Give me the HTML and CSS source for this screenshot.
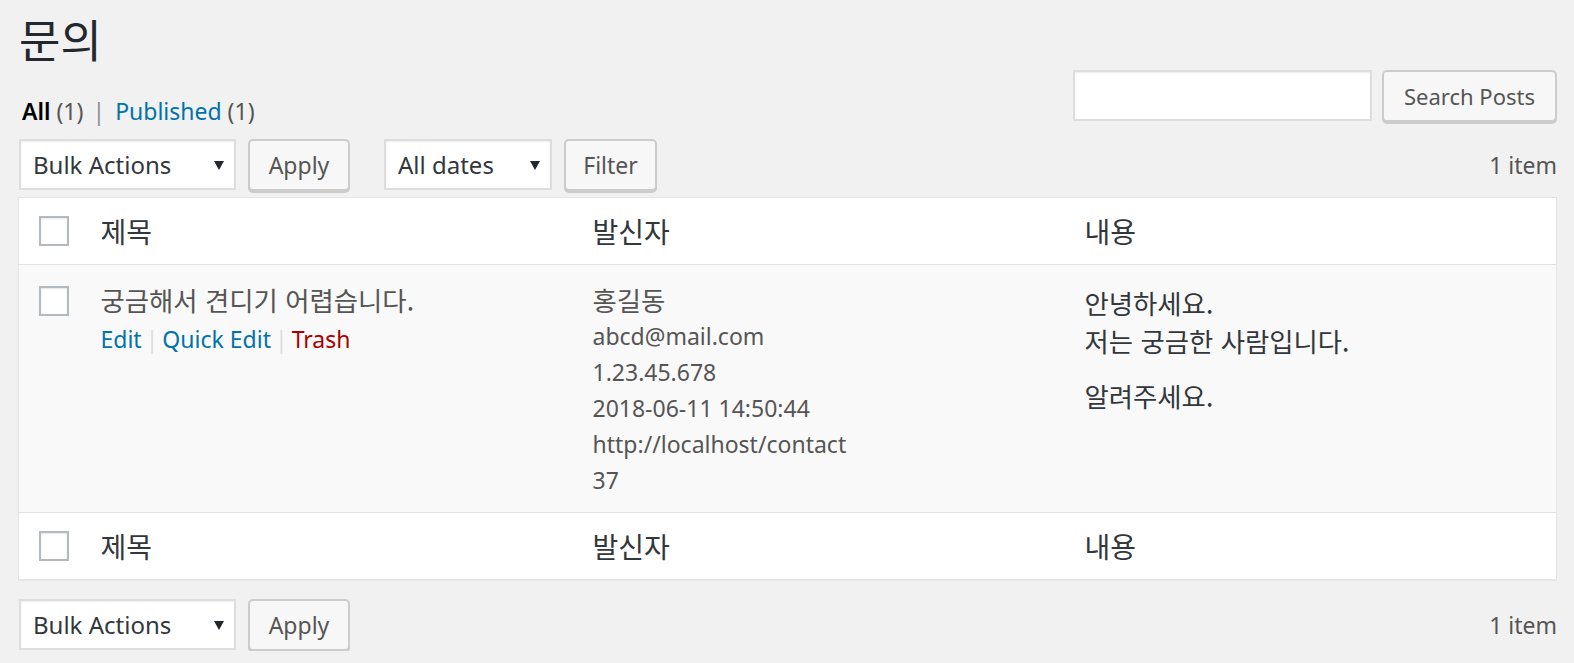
FILE: index.html
```html
<!DOCTYPE html>
<html lang="ko">
<head>
<meta charset="utf-8">
<title>문의</title>
<link rel="stylesheet" href="styles.css">
</head>
<body>
<div class="wrap">
  <h1 class="page-title">문의</h1>
  <div class="top-bar">
    <ul class="subsubsub">
      <li class="current">All <span class="count">(1)</span></li>
      <li class="sep">|</li>
      <li><a class="link">Published</a> <span class="count">(1)</span></li>
    </ul>
    <div class="search-box">
      <input class="search-input" type="text">
      <button class="button btn-search">Search Posts</button>
    </div>
  </div>

  <div class="tablenav">
    <div class="actions">
      <div class="select select-bulk"><span>Bulk Actions</span><span class="arrow"></span></div>
      <button class="button btn-apply">Apply</button>
    </div>
    <div class="actions">
      <div class="select select-dates"><span>All dates</span><span class="arrow"></span></div>
      <button class="button btn-filter">Filter</button>
    </div>
    <div class="displaying-num">1 item</div>
  </div>

  <table class="list-table">
    <colgroup>
      <col class="col-cb">
      <col class="col-title">
      <col class="col-sender">
      <col>
    </colgroup>
    <thead>
      <tr>
        <td class="check-column"><span class="checkbox"></span></td>
        <th>제목</th>
        <th>발신자</th>
        <th>내용</th>
      </tr>
    </thead>
    <tbody>
      <tr class="alt">
        <td class="check-column"><span class="checkbox"></span></td>
        <td class="title-cell">
          <div class="row-title ko">궁금해서 견디기 어렵습니다.</div>
          <div class="row-actions">
            <a class="link">Edit</a><span class="bar">|</span><a class="link">Quick Edit</a><span class="bar">|</span><a class="trash">Trash</a>
          </div>
        </td>
        <td class="sender">
          <div class="ko">홍길동</div>
          <div>abcd@mail.com</div>
          <div>1.23.45.678</div>
          <div>2018-06-11 14:50:44</div>
          <div>http://localhost/contact</div>
          <div>37</div>
        </td>
        <td class="content ko">
          <p>안녕하세요.<br>저는 궁금한 사람입니다.</p>
          <p>알려주세요.</p>
        </td>
      </tr>
    </tbody>
    <tfoot>
      <tr>
        <td class="check-column"><span class="checkbox"></span></td>
        <th>제목</th>
        <th>발신자</th>
        <th>내용</th>
      </tr>
    </tfoot>
  </table>

  <div class="tablenav tablenav-bottom">
    <div class="actions">
      <div class="select select-bulk"><span>Bulk Actions</span><span class="arrow"></span></div>
      <button class="button btn-apply">Apply</button>
    </div>
    <div class="displaying-num">1 item</div>
  </div>
</div>
</body>
</html>
```

FILE: styles.css
```css
html, body {
  margin: 0;
  padding: 0;
  background: #f1f1f1;
}
body {
  font-family: "Noto Sans", "Noto Sans CJK KR", sans-serif;
  color: #444;
  font-size: 23px;
}
.ko {
  font-family: "Noto Sans CJK KR", "Noto Sans", sans-serif;
}
.wrap {
  padding: 0 17px 0 18px;
}
.page-title {
  margin: 0;
  padding: 8px 0 0 1px;
  height: 62px;
  font-family: "Noto Sans CJK KR", sans-serif;
  font-size: 45px;
  line-height: 62px;
  font-weight: 400;
  color: #23282d;
}
.top-bar {
  display: flex;
  justify-content: space-between;
  align-items: flex-start;
}
.subsubsub {
  list-style: none;
  margin: 23px 0 0 4px;
  padding: 0;
  display: flex;
  font-size: 23px;
  line-height: 36px;
  color: #555;
}
.subsubsub .current {
  color: #000;
  font-weight: 600;
}
.subsubsub .current .count {
  font-weight: 400;
}
.subsubsub .sep {
  color: #8c8f94;
  padding: 0 10px 0 9px;
}
.count {
  color: #555;
}
.link {
  color: #0073aa;
}
.trash {
  color: #a00;
}
.search-box {
  display: flex;
  gap: 10px;
}
.search-input {
  width: 299px;
  height: 51px;
  box-sizing: border-box;
  border: 2px solid #ddd;
  background: #fff;
  box-shadow: inset 0 1px 2px rgba(0,0,0,.07);
  margin: 0;
}
.button {
  height: 52px;
  box-sizing: border-box;
  border: 2px solid #ccc;
  border-radius: 5px;
  background: #f7f7f7;
  box-shadow: 0 2px 0 #ccc;
  color: #555;
  font-family: "Noto Sans", sans-serif;
  font-size: 23px;
  padding: 0;
  line-height: 46px;
  margin: 0;
}
.btn-search {
  width: 175px;
  font-size: 22px;
}
.tablenav {
  display: flex;
  align-items: center;
  height: 52px;
  margin: 10px 0 6px;
}
.tablenav-bottom {
  margin: 19px 0 0;
}
.actions {
  display: flex;
  gap: 12px;
  margin-left: 1px;
  margin-right: 33px;
}
.select {
  position: relative;
  box-sizing: border-box;
  height: 51px;
  border: 2px solid #ddd;
  background: #fff;
  box-shadow: inset 0 1px 2px rgba(0,0,0,.07);
  color: #32373c;
  font-size: 24px;
  line-height: 47px;
  padding-left: 12px;
}
.select-bulk {
  width: 217px;
}
.select-dates {
  width: 168px;
}
.arrow {
  position: absolute;
  right: 10px;
  top: 20px;
  width: 0;
  height: 0;
  border-left: 5px solid transparent;
  border-right: 5px solid transparent;
  border-top: 9px solid #23282d;
}
.btn-apply {
  width: 102px;
}
.btn-filter {
  width: 93px;
}
.displaying-num {
  margin-left: auto;
  color: #555;
  font-size: 23px;
}
.list-table {
  width: 100%;
  table-layout: fixed;
  border-collapse: collapse;
  border: 1px solid #e5e5e5;
  background: #fff;
  box-shadow: 0 1px 1px rgba(0,0,0,.04);
}
.col-cb {
  width: 67px;
}
.col-title {
  width: 492px;
}
.col-sender {
  width: 492px;
}
.list-table th {
  text-align: left;
  font-family: "Noto Sans CJK KR", sans-serif;
  font-weight: 400;
  font-size: 28px;
  color: #32373c;
  height: 67px;
  padding: 0 15px;
  box-sizing: border-box;
  vertical-align: middle;
}
.list-table thead tr {
  border-bottom: 1px solid #e1e1e1;
}
.list-table tfoot tr {
  border-top: 1px solid #e1e1e1;
}
.check-column {
  padding: 0 0 0 20px;
  vertical-align: middle;
}
.checkbox {
  display: block;
  width: 30px;
  height: 30px;
  box-sizing: border-box;
  border: 2px solid #b4b9be;
  background: #fff;
  box-shadow: inset 0 1px 2px rgba(0,0,0,.1);
}
tbody .check-column {
  vertical-align: top;
  padding-top: 21px;
}
tbody tr.alt {
  background: #f9f9f9;
}
tbody td {
  vertical-align: top;
  padding: 17px 15px 14px;
  font-size: 23px;
  line-height: 36px;
  color: #555;
}
.row-title {
  font-size: 26.4px;
  line-height: 36px;
  color: #555;
}
.row-actions {
  padding-top: 3px;
}
.row-actions .bar {
  color: #ddd;
  margin: 0 4px;
}
.sender .ko {
  font-size: 26.4px;
}
tbody td.content {
  padding-top: 19px;
  color: #32373c;
  font-size: 26.4px;
}
.content p {
  margin: 0 0 17px;
  line-height: 38px;
}
```
